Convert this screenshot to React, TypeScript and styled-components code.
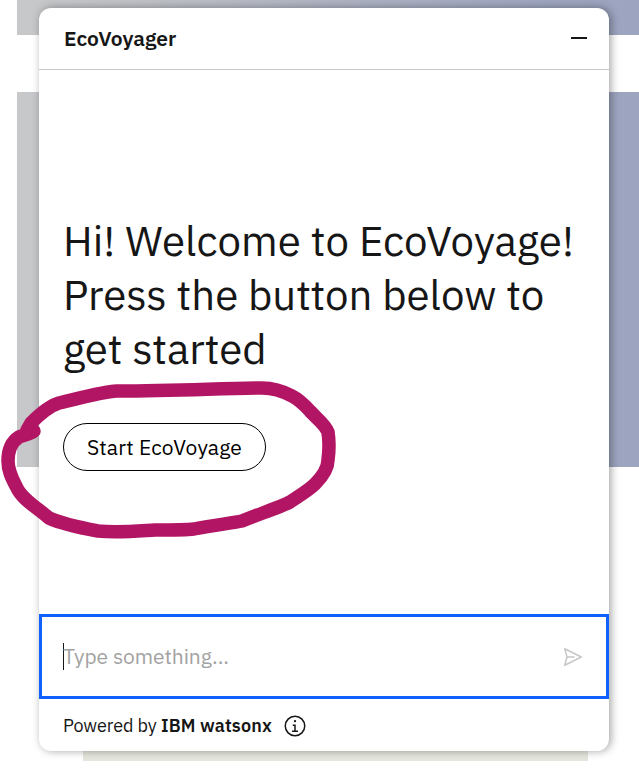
import React from "react";
import styled, { createGlobalStyle } from "styled-components";

const GlobalStyle = createGlobalStyle`
  * { box-sizing: border-box; }
  body { margin: 0; background: #fff; overflow: hidden; }
`;

const Page = styled.div`
  position: relative;
  width: 639px;
  height: 778px;
  overflow: hidden;
  background: #fff;
  color: #161616;
  font-family: "IBM Plex Sans", Roboto, "Liberation Sans", sans-serif;
`;

const Backdrop = styled.div`
  display: flex;
  flex-direction: column;
  height: 100%;
`;

const Banner = styled.div<{ $height: number; $gap: number }>`
  flex: none;
  height: ${(p) => p.$height}px;
  margin: 0 0 ${(p) => p.$gap}px 17px;
  background: linear-gradient(90deg, #c7c8ca 0, #c4c5c8 70px, #9da5bf 540px, #9ca4bf 100%);
`;

const Strip = styled.div`
  flex: none;
  width: 505px;
  height: 61px;
  margin-left: 83px;
  background: #e5e6dd;
`;

const ChatWindow = styled.section`
  position: absolute;
  left: 39px;
  top: 8px;
  width: 570px;
  height: 743px;
  display: flex;
  flex-direction: column;
  overflow: hidden;
  background: #fff;
  border-radius: 12px;
  box-shadow: 2px 0 8px rgba(0, 0, 0, 0.36);
`;

const Header = styled.header`
  flex: none;
  height: 62px;
  padding: 0 18px 2px 25px;
  display: flex;
  align-items: center;
  justify-content: space-between;
  border-bottom: 1px solid #c6c6c6;
`;

const Title = styled.h1`
  margin: 0;
  font-size: 21px;
  line-height: 28px;
  font-weight: 600;
  letter-spacing: 0;
`;

const IconButton = styled.button`
  display: flex;
  padding: 0;
  border: 0;
  background: none;
  color: inherit;
`;

const Welcome = styled.main`
  flex: 1;
  display: flex;
  flex-direction: column;
  align-items: flex-start;
  padding: 144px 24px 0;
`;

const Greeting = styled.h2`
  margin: 0 0 47px;
  font-size: 42px;
  line-height: 54px;
  font-weight: 400;
  white-space: nowrap;
`;

const Line = styled.span<{ $spacing: number }>`
  display: block;
  letter-spacing: ${(p) => p.$spacing}px;
`;

const StartButton = styled.button`
  width: 203px;
  height: 48px;
  padding: 0;
  border: 1px solid #000;
  border-radius: 24px;
  background: #fff;
  color: #000;
  font: 400 21px/28px "IBM Plex Sans", Roboto, sans-serif;
  letter-spacing: 0.2px;
  white-space: nowrap;
`;

const InputBar = styled.div`
  flex: none;
  height: 85px;
  padding: 0 21px;
  display: flex;
  align-items: center;
  justify-content: space-between;
  border: 3px solid #0f62fe;
  color: #c6c6c6;
`;

const Placeholder = styled.span`
  height: 27px;
  border-left: 1px solid #161616;
  color: #a2a2a2;
  font-size: 21px;
  line-height: 27px;
  letter-spacing: -0.07px;
  text-indent: -1px;
  white-space: nowrap;
`;

const Footer = styled.footer`
  flex: none;
  height: 52px;
  padding: 1px 24px 0;
  display: flex;
  align-items: center;
  font-size: 18px;
  line-height: 24px;
  white-space: nowrap;
`;

const Powered = styled.span`
  width: 98px;
  letter-spacing: -0.1px;
`;

const Brand = styled.strong`
  width: 122px;
  font-weight: 600;
  letter-spacing: 0.15px;
`;

const Marker = styled.svg`
  position: absolute;
  inset: 0;
  pointer-events: none;
`;

export default function App() {
  return (
    <Page>
      <GlobalStyle />
      <Backdrop>
        <Banner $height={35} $gap={57} />
        <Banner $height={375} $gap={233} />
        <Strip />
      </Backdrop>
      <ChatWindow>
        <Header>
          <Title>EcoVoyager</Title>
          <IconButton aria-label="Minimize">
            <svg width="24" height="24" viewBox="0 0 24 24">
              <path d="M4 11h16v2H4z" fill="currentColor" />
            </svg>
          </IconButton>
        </Header>
        <Welcome>
          <Greeting>
            <Line $spacing={0.04}>Hi! Welcome to EcoVoyage!</Line>
            <Line $spacing={-0.04}>Press the button below to</Line>
            <Line $spacing={-0.1}>get started</Line>
          </Greeting>
          <StartButton>Start EcoVoyage</StartButton>
        </Welcome>
        <InputBar>
          <Placeholder>Type something...</Placeholder>
          <IconButton aria-label="Send">
            <svg width="24" height="24" viewBox="0 0 32 32" fill="currentColor">
              <path d="M27.45,15.11l-22-11a1,1,0,0,0-1.08.12,1,1,0,0,0-.33,1L7,16,4,26.74A1,1,0,0,0,5,28a1,1,0,0,0,.45-.11l22-11a1,1,0,0,0,0-1.78Zm-20.9,10L8.76,17H18V15H8.76L6.55,6.89,24.76,16Z" />
            </svg>
          </IconButton>
        </InputBar>
        <Footer>
          <Powered>Powered by</Powered>
          <Brand>IBM watsonx</Brand>
          <IconButton aria-label="Information">
            <svg width="24" height="24" viewBox="0 0 32 32" fill="currentColor">
              <path d="M17 22V14H13v2h2v6H12v2h8V22ZM16 8a1.5 1.5 0 1 0 1.5 1.5A1.5 1.5 0 0 0 16 8Z" />
              <path d="M16 30A14 14 0 1 1 30 16 14 14 0 0 1 16 30ZM16 4A12 12 0 1 0 28 16 12 12 0 0 0 16 4Z" />
            </svg>
          </IconButton>
        </Footer>
      </ChatWindow>
      <Marker width="639" height="778" viewBox="0 0 639 778" fill="none">
        <path
          d="M34 431C31 434 25 435 19 437Q8 444 8 461C8 472 13 480 17 488C22 499 36 507 49 518C62 524 82 528 98 531C117 533 138 531 155 530C171 530 185 530 194 529C214 525 233 523 242 521C259 514 281 507 290 502C299 496 309 490 315 484C322 477 328 469 328 460Q330 445 328 432C325 424 316 418 310 411Q300 400 292 396Q277 388 262 388C223 388 181 391 117 391C100 392 77 399 59 403C49 406 38 416 31 423L27 430"
          stroke="#b31565"
          strokeWidth="13.5"
          strokeLinecap="round"
          strokeLinejoin="round"
        />
      </Marker>
    </Page>
  );
}
